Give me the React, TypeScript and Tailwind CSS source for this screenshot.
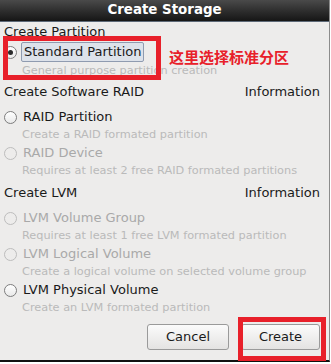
import React from "react";

type Opt = {
    label: string;
    desc: string;
    enabled?: boolean;
    checked?: boolean;
    highlight?: boolean;
};

const Radio: React.FC<{ enabled?: boolean; checked?: boolean }> = ({ enabled, checked }) => (
    <span
        className={
            "flex items-center justify-center w-[13px] h-[13px] rounded-full border shrink-0 " +
            (enabled
                ? "border-[#7d7d7d] bg-gradient-to-b from-[#ffffff] to-[#e9e9e9]"
                : "border-[#bdbdbd] bg-transparent")
        }
    >
        {checked && <span className="w-[5px] h-[5px] rounded-full bg-[#2b2b2b]" />}
    </span>
);

const OptionRow: React.FC<{ opt: Opt; first?: boolean }> = ({ opt, first }) => (
    <>
        <div className={"flex items-center pl-[4px] " + (opt.highlight ? "h-[20px]" : "h-[18px]")}>
            <Radio enabled={opt.enabled} checked={opt.checked} />
            <span
                className={
                    "ml-[4px] px-[2px] leading-[18px] text-[13px] " +
                    (opt.highlight
                        ? "h-[20px] flex items-center border border-[#8f9bb0] bg-[#dde2ea] rounded-[2px] px-[1px] "
                        : "") +
                    (opt.enabled ? "text-[#1a1a1a]" : "text-[#a9a9a9]")
                }
            >
                {opt.label}
            </span>
        </div>
        <div className="h-[18px] flex items-center pl-[22px] text-[11.3px] text-[#bababa]">
            {opt.desc}
        </div>
    </>
);

const Header: React.FC<{ title: string; info?: boolean }> = ({ title, info }) => (
    <div className="h-[22px] flex items-center justify-between pl-[4px] pr-[9px] text-[13px] text-[#1a1a1a]">
        <span>{title}</span>
        {info && <span>Information</span>}
    </div>
);

const raid: Opt[] = [
    { label: "RAID Partition", desc: "Create a RAID formated partition", enabled: true },
    { label: "RAID Device", desc: "Requires at least 2 free RAID formated partitions" },
];

const lvm: Opt[] = [
    { label: "LVM Volume Group", desc: "Requires at least 1 free LVM formated partition" },
    { label: "LVM Logical Volume", desc: "Create a logical volume on selected volume group" },
    { label: "LVM Physical Volume", desc: "Create an LVM formated partition", enabled: true },
];

export default function App() {
    return (
        <div
            className="relative w-[331px] h-[364px] bg-white overflow-hidden"
            style={{ fontFamily: '"DejaVu Sans", "Noto Sans CJK SC", sans-serif' }}
        >
            <div className="w-[330px] h-[362px] flex flex-col bg-[#edeceb] border-r border-r-[#8c8c8c] border-b-2 border-b-[#111]">
                <div className="h-[22px] shrink-0 flex items-center justify-center bg-gradient-to-b from-[#4a4a4a] to-[#161616] border-b border-b-[#5e6a78]">
                    <span className="text-[13.4px] font-bold text-white">Create Storage</span>
                </div>

                <div className="mt-[1px] h-[18px] flex items-center pl-[4px] text-[13px] text-[#1a1a1a]">
                    Create Partition
                </div>
                <div className="mt-[1px]">
                    <OptionRow
                        opt={{
                            label: "Standard Partition",
                            desc: "General purpose partition creation",
                            enabled: true,
                            checked: true,
                            highlight: true,
                        }}
                    />
                </div>

                <div className="mt-[1px]">
                    <Header title="Create Software RAID" info />
                </div>
                <div className="mt-[5px]">
                    {raid.map(o => (
                        <OptionRow key={o.label} opt={o} />
                    ))}
                </div>

                <div className="mt-[2px]">
                    <Header title="Create LVM" info />
                </div>
                <div className="mt-[5px]">
                    {lvm.map(o => (
                        <OptionRow key={o.label} opt={o} />
                    ))}
                </div>

                <div className="mt-[7px] flex justify-end gap-[12px] pr-[9px]">
                    <button className="w-[82px] h-[26px] rounded-[3px] border border-[#9a9a9a] bg-gradient-to-b from-[#fbfbfb] to-[#e4e3e2] text-[13px] text-[#1a1a1a]">
                        Cancel
                    </button>
                    <button className="w-[79px] h-[26px] rounded-[3px] border border-[#9a9a9a] bg-gradient-to-b from-[#fbfbfb] to-[#e4e3e2] text-[13px] text-[#1a1a1a]">
                        Create
                    </button>
                </div>
            </div>

            {/* annotation overlays */}
            <div className="absolute left-[3px] top-[36px] w-[158px] h-[44px] border-[5px] border-[#e8202a]" />
            <div className="absolute left-[169px] top-[48px] text-[15px] leading-[20px] font-bold text-[#e8202a]">
                这里选择标准分区
            </div>
            <div className="absolute left-[238px] top-[317px] w-[88px] h-[44px] border-[5px] border-[#e8202a]" />
        </div>
    );
}
